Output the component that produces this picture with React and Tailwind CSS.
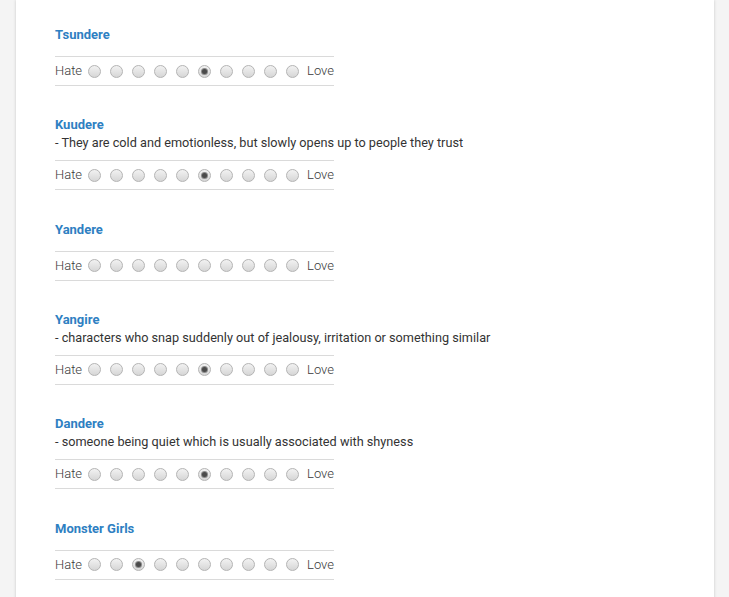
import React from "react";

const items = [
  { title: "Tsundere", desc: null, sel: 5 },
  { title: "Kuudere", desc: "- They are cold and emotionless, but slowly opens up to people they trust", sel: 5 },
  { title: "Yandere", desc: null, sel: -1 },
  { title: "Yangire", desc: "- characters who snap suddenly out of jealousy, irritation or something similar", sel: 5 },
  { title: "Dandere", desc: "- someone being quiet which is usually associated with shyness", sel: 5 },
  { title: "Monster Girls", desc: null, sel: 2 },
];

function Radio({ checked }) {
  return (
    <span className="flex h-[13px] w-[13px] items-center justify-center rounded-full border border-[#b4b4b4] bg-[linear-gradient(180deg,#f2f2f2,#d6d6d6)]">
      {checked && <span className="h-[5px] w-[5px] rounded-full bg-[#4a4a4a] shadow-[0_0_0_1px_#8a8a8a]" />}
    </span>
  );
}

function Item({ title, desc, sel }) {
  return (
    <div className={"flex flex-col " + (desc ? "pb-[30.5px]" : "pb-[30px]")}>
      <div className="text-[13px] font-bold leading-[18px] text-[#2e80c2]">{title}</div>
      {desc && <div className="text-[12.7px] leading-[18px] text-[#333]">{desc}</div>}
      <div
        className={
          "flex h-[30px] w-[279px] items-center border-y border-[#dadada] text-[13px] font-light text-[#3a3a3a] " +
          (desc ? "mt-[8px]" : "mt-[12px]")
        }
      >
        <span className="w-[33px]">Hate</span>
        <div className="flex gap-[9px]">
          {Array.from({ length: 10 }).map((_, i) => (
            <Radio key={i} checked={i === sel} />
          ))}
        </div>
        <span className="ml-auto">Love</span>
      </div>
    </div>
  );
}

export default function App() {
  return (
    <div className="min-h-[597px] w-full bg-[#f4f4f4] font-['Roboto',sans-serif]">
      <div className="ml-[16px] mr-[15px] min-h-[597px] bg-white pl-[39px] pt-[26px] shadow-[0_0_3px_rgba(0,0,0,0.18)]">
        {items.map((it) => (
          <Item key={it.title} {...it} />
        ))}
      </div>
    </div>
  );
}
